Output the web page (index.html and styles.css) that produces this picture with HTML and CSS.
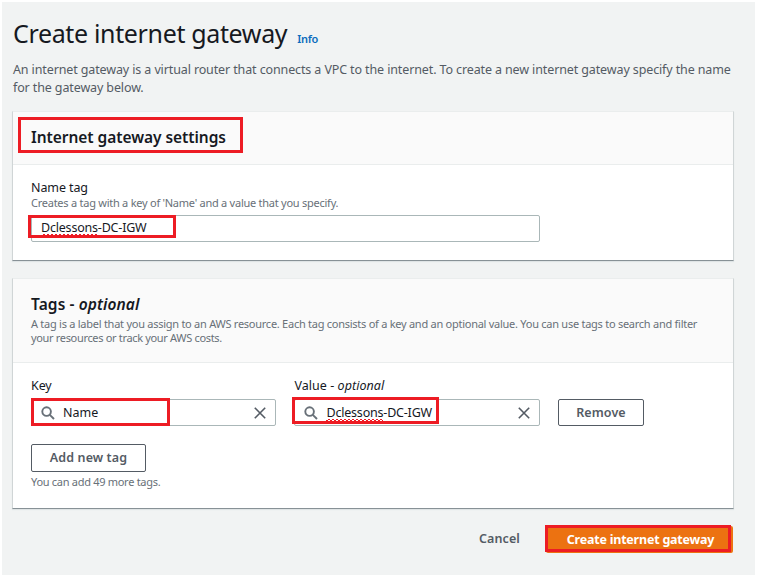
FILE: index.html
```html
<!DOCTYPE html>
<html lang="en">
<head>
<meta charset="utf-8">
<title>Create internet gateway</title>
<link rel="stylesheet" href="styles.css">
</head>
<body>
<main class="page">
  <header class="intro">
    <div class="title-row"><h1>Create internet gateway</h1><a class="info">Info</a></div>
    <p class="lead">An internet gateway is a virtual router that connects a VPC to the internet. To create a new internet gateway specify the name<br>for the gateway below.</p>
  </header>

  <section class="card settings">
    <div class="card-head">
      <h2>Internet gateway settings</h2>
      <i class="mark mark-heading"></i>
    </div>
    <div class="card-body">
      <div class="label">Name tag</div>
      <div class="hint">Creates a tag with a key of 'Name' and a value that you specify.</div>
      <div class="input wide"><span class="val"><span class="typo">Dclessons</span>-DC-IGW</span><i class="mark mark-name"></i></div>
    </div>
  </section>

  <section class="card tags">
    <div class="card-head">
      <h2>Tags - <em>optional</em></h2>
      <p class="desc">A tag is a label that you assign to an AWS resource. Each tag consists of a key and an optional value. You can use tags to search and filter<br><span class="desc-b">your resources or track your AWS costs.</span></p>
    </div>
    <div class="card-body">
      <div class="tag-row">
        <div class="field">
          <div class="label">Key</div>
          <div class="input">
            <svg class="search" viewBox="0 0 14 14"><circle cx="5.6" cy="5.6" r="4.3"/><path d="M8.8 8.8 13 13"/></svg>
            <span class="plain">Name</span>
            <svg class="clear" viewBox="0 0 12 12"><path d="M.8.8l10.4 10.4M11.2.8.8 11.2"/></svg>
            <i class="mark mark-key"></i>
          </div>
        </div>
        <div class="field">
          <div class="label value-label">Value - <em>optional</em></div>
          <div class="input">
            <svg class="search" viewBox="0 0 14 14"><circle cx="5.6" cy="5.6" r="4.3"/><path d="M8.8 8.8 13 13"/></svg>
            <span class="val"><span class="typo">Dclessons</span>-DC-IGW</span>
            <svg class="clear" viewBox="0 0 12 12"><path d="M.8.8l10.4 10.4M11.2.8.8 11.2"/></svg>
            <i class="mark mark-value"></i>
          </div>
        </div>
        <button class="btn remove">Remove</button>
      </div>
      <button class="btn add">Add new tag</button>
      <div class="hint more">You can add 49 more tags.</div>
    </div>
  </section>

  <footer class="actions">
    <a class="cancel">Cancel</a>
    <button class="primary">Create internet gateway<i class="mark mark-create"></i></button>
  </footer>
</main>
</body>
</html>
```

FILE: styles.css
```css
* { box-sizing: border-box; }
body { margin: 0; background: #fff; font-family: "Noto Sans", sans-serif; font-size: 12.5px; color: #16191f; }
h1, h2, p { margin: 0; }
.page { width: 753px; height: 573px; margin: 2px 0 0 2px; padding: 14px 21px 0 10px; background: #f1f3f3; white-space: nowrap; }
.intro { height: 95px; padding-left: 1px; }
.title-row { display: flex; align-items: baseline; gap: 10px; height: 36px; line-height: 34px; }
h1 { font-size: 25px; font-weight: 400; letter-spacing: -.35px; }
.info { font-size: 11px; font-weight: 600; letter-spacing: -.3px; color: #0b6cbd; }
.lead { padding-top: 9px; line-height: 18px; letter-spacing: -.12px; color: #545b64; }
.card { background: #fff; border: 1px solid #d0d5d6; border-top-color: #eaeded; border-bottom-color: #879196; box-shadow: 0 1px 1px #dfe4e5; width: 722px; }
.settings { height: 150px; margin-bottom: 17px; }
.tags { height: 231px; }
.card-head { position: relative; padding: 0 18px; background: #fafafa; border-bottom: 1px solid #eaeded; }
.settings .card-head { height: 53px; padding-top: 14px; }
.tags .card-head { height: 84px; padding-top: 14px; }
h2 { font-size: 15.5px; line-height: 22px; font-weight: 600; letter-spacing: -.05px; }
.tags h2 { letter-spacing: .1px; }
.desc { font-size: 11px; line-height: 14px; letter-spacing: -.26px; color: #687078; padding-top: 2px; }
.desc-b { letter-spacing: -.33px; }
.card-body { padding: 14px 18px 0; }
.label { height: 18px; line-height: 18px; letter-spacing: -.1px; }
.value-label { letter-spacing: .04px; }
.hint { height: 14px; line-height: 12px; font-size: 11px; letter-spacing: -.25px; color: #687078; }
.input { position: relative; display: flex; align-items: center; height: 27px; padding: 0 9px; border: 1px solid #aab7b8; border-radius: 2px; background: #fff; line-height: 25px; }
.wide { width: 509px; margin-top: 4px; }
.wide .val { top: -1px; }
.val { position: relative; letter-spacing: -.2px; }
.typo { display: inline-block; line-height: 17px; background: repeating-linear-gradient(90deg, #ed1c24 0 2px, transparent 2px 4px) 0 100% / 100% 1px no-repeat, repeating-linear-gradient(90deg, transparent 0 2px, #ed1c24 2px 4px) 0 calc(100% - 1px) / 100% 1px no-repeat; }
.search { width: 14px; height: 14px; margin-right: 8px; fill: none; stroke: #687078; stroke-width: 1.9; }
.clear { width: 12px; height: 12px; margin-left: auto; fill: none; stroke: #545b64; stroke-width: 1.6; }
.tag-row { display: flex; align-items: flex-end; gap: 18.3px; }
.field { width: 245.2px; }
.field .label { margin-bottom: 4px; }
.btn { display: flex; align-items: center; justify-content: center; padding: 0; border: 1px solid #545b64; border-radius: 2px; background: #fff; color: #545b64; font: 600 12.5px "Noto Sans", sans-serif; letter-spacing: .1px; }
.remove { width: 86px; height: 27px; }
.add { width: 115px; height: 28px; margin: 18px 0 4px; padding-bottom: 1px; }
.more { letter-spacing: -.29px; }
.actions { display: flex; justify-content: flex-end; align-items: center; gap: 26px; height: 27px; margin-top: 17px; padding-right: 1px; font-weight: 600; }
.cancel { position: relative; color: #545b64; letter-spacing: .1px; padding-bottom: 2px; }
.primary { position: relative; width: 187px; height: 27px; padding: 0 0 1px 2px; border: 0; border-radius: 2px; background: #ec7211; color: #fff; font: 700 12.5px "Noto Sans", sans-serif; letter-spacing: -.21px; }
.mark { position: absolute; border: 3px solid #ed1c24; pointer-events: none; }
.mark-heading { left: 5px; top: 5px; width: 225px; height: 36px; }
.mark-name { left: -4px; top: -1px; width: 148px; height: 23px; }
.mark-key { left: -1px; top: -2px; width: 139px; height: 28px; }
.mark-value { left: -3px; top: -3px; width: 147px; height: 27px; }
.mark-create { left: -1px; top: -1px; width: 186px; height: 27px; }
```
